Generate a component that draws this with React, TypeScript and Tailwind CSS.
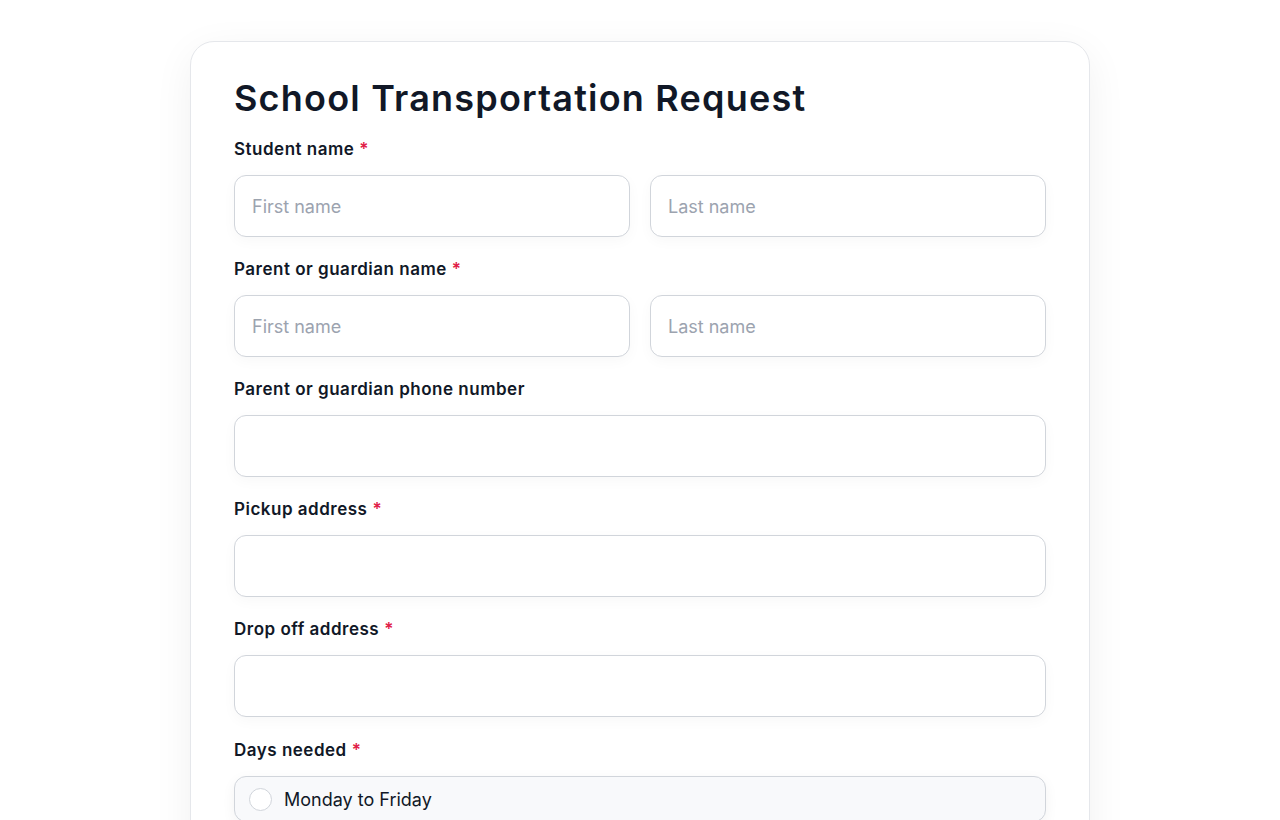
import React from 'react';

const font = { fontFamily: 'Inter, "Noto Sans", sans-serif' };

function Label({ text, required }: { text: string; required?: boolean }) {
  return (
    <div className="mb-[14px] h-6 text-[17px] leading-6 font-semibold tracking-[0.5px] text-[#111827]">
      {text}
      {required && <span className="ml-[5px] text-[#e11d48]">*</span>}
    </div>
  );
}

function Input({ placeholder }: { placeholder?: string }) {
  return (
    <input
      type="text"
      placeholder={placeholder}
      className="block h-[62px] w-full rounded-[12px] border border-[#d1d5db] bg-white px-[17px] text-[18px] text-[#111827] placeholder:text-[#9ca3af] shadow-[0_4px_14px_rgba(17,24,39,0.03)] outline-none"
    />
  );
}

export default function App() {
  return (
    <div className="min-h-screen bg-white pt-[41px]" style={font}>
      <div className="mx-auto w-[900px] rounded-[24px] border border-[#e5e7eb] bg-white px-[43px] pt-[36px] pb-10 shadow-[0_10px_40px_rgba(17,24,39,0.06)]">
        <h1 className="mb-[19px] text-[36px] leading-10 font-semibold tracking-[1.2px] text-[#111827]">
          School Transportation Request
        </h1>

        <div className="flex flex-col gap-5">
          <div>
            <Label text="Student name" required />
            <div className="grid grid-cols-2 gap-5">
              <Input placeholder="First name" />
              <Input placeholder="Last name" />
            </div>
          </div>

          <div>
            <Label text="Parent or guardian name" required />
            <div className="grid grid-cols-2 gap-5">
              <Input placeholder="First name" />
              <Input placeholder="Last name" />
            </div>
          </div>

          <div>
            <Label text="Parent or guardian phone number" />
            <Input />
          </div>

          <div>
            <Label text="Pickup address" required />
            <Input />
          </div>

          <div>
            <Label text="Drop off address" required />
            <Input />
          </div>

          <div className="pt-px">
            <Label text="Days needed" required />
            <div className="flex flex-col gap-3">
              {['Monday to Friday', 'Weekends only', 'Specific days'].map((opt) => (
                <label
                  key={opt}
                  className="flex h-[46px] items-center gap-3 rounded-[12px] border border-[#d1d5db] bg-[#f8f9fb] px-[14px] shadow-[0_4px_14px_rgba(17,24,39,0.05)]"
                >
                  <span className="h-[23px] w-[23px] rounded-full border border-[#d1d5db] bg-white" />
                  <span className="text-[18px] text-[#111827]">{opt}</span>
                </label>
              ))}
            </div>
          </div>
        </div>
      </div>
    </div>
  );
}
